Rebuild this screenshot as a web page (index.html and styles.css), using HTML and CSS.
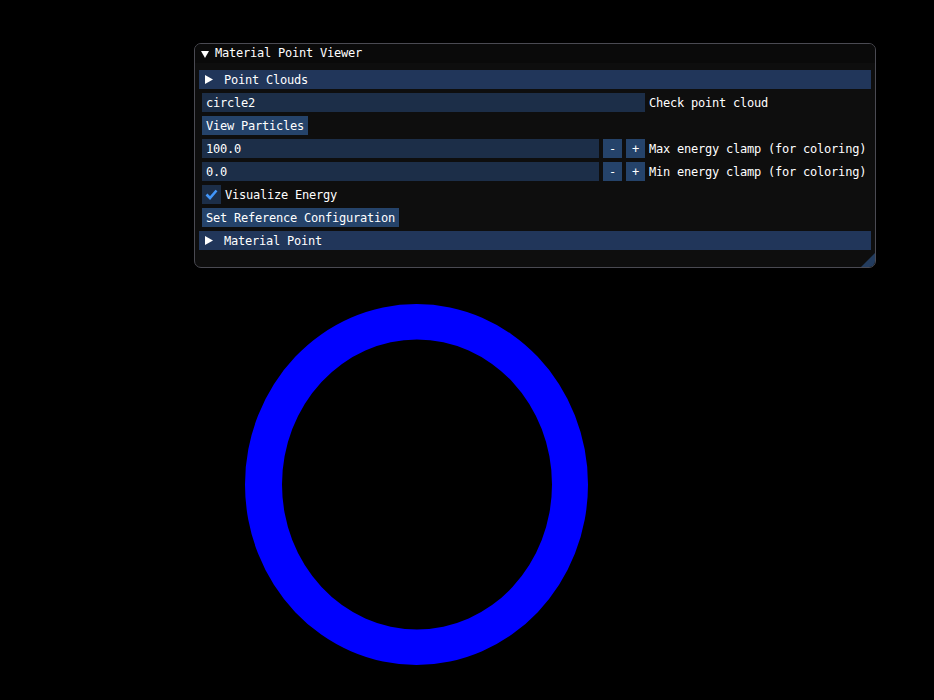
FILE: index.html
```html
<!DOCTYPE html>
<html>
<head>
<meta charset="utf-8">
<link rel="stylesheet" href="styles.css">
</head>
<body>
<div class="scene">
  <svg class="viewport" width="934" height="700" viewBox="0 0 934 700">
    <path fill="#0000ff" fill-rule="evenodd" d="M245 484.5 A171.5 180.5 0 1 0 588 484.5 A171.5 180.5 0 1 0 245 484.5 Z M282 484.5 A135 145 0 1 0 552 484.5 A135 145 0 1 0 282 484.5 Z"/>
  </svg>

  <div class="win">
    <div class="titlebar">
      <svg class="tri" width="8" height="8" viewBox="0 0 8 8"><polygon points="0,1 8,1 4,8" fill="#fff"/></svg>
      <span class="title">Material Point Viewer</span>
    </div>
    <div class="content">
      <div class="header">
        <svg class="tri" width="8" height="9" viewBox="0 0 8 9"><polygon points="0,0 8,4.5 0,9" fill="#fff"/></svg>
        <span class="txt">Point Clouds</span>
      </div>
      <div class="row">
        <div class="input wide">circle2</div>
        <span class="label">Check point cloud</span>
      </div>
      <div class="row">
        <div class="btn">View Particles</div>
      </div>
      <div class="row">
        <div class="input drag">100.0</div>
        <div class="btn sq">-</div>
        <div class="btn sq">+</div>
        <span class="label">Max energy clamp (for coloring)</span>
      </div>
      <div class="row">
        <div class="input drag">0.0</div>
        <div class="btn sq">-</div>
        <div class="btn sq">+</div>
        <span class="label">Min energy clamp (for coloring)</span>
      </div>
      <div class="row">
        <div class="check">
          <svg width="13" height="11" viewBox="0 0 13 11"><polyline points="1.5,5.5 5,9 11.5,1.5" fill="none" stroke="#4296fa" stroke-width="2.6"/></svg>
        </div>
        <span class="label">Visualize Energy</span>
      </div>
      <div class="row">
        <div class="btn">Set Reference Configuration</div>
      </div>
      <div class="header">
        <svg class="tri" width="8" height="9" viewBox="0 0 8 9"><polygon points="0,0 8,4.5 0,9" fill="#fff"/></svg>
        <span class="txt">Material Point</span>
      </div>
    </div>
    <div class="grip"></div>
  </div>
</div>
</body>
</html>
```

FILE: styles.css
```css
html, body {
  margin: 0;
  padding: 0;
  background: #000;
}

.scene {
  position: relative;
  width: 934px;
  height: 700px;
  overflow: hidden;
  background: #000;
  font-family: "DejaVu Sans Mono", "Liberation Mono", monospace;
  font-size: 12px;
  letter-spacing: -0.22px;
  color: #fff;
}

.viewport {
  position: absolute;
  left: 0;
  top: 0;
  display: block;
}

.win {
  position: absolute;
  left: 194px;
  top: 43px;
  width: 682px;
  height: 225px;
  box-sizing: border-box;
  border: 1px solid #4a4a52;
  border-radius: 7px;
  background: #0e0e0e;
  overflow: hidden;
}

.titlebar {
  height: 19px;
  display: flex;
  align-items: center;
  padding-left: 6px;
  background: #0a0a0a;
}

.titlebar .tri {
  margin-right: 6px;
}

.title {
  line-height: 19px;
}

.content {
  display: flex;
  flex-direction: column;
  gap: 4px;
  padding: 7px 7px 0 7px;
}

.header {
  height: 19px;
  margin: 0 -3px;
  display: flex;
  align-items: center;
  padding-left: 6px;
  background: #21365a;
}

.header .tri {
  margin-right: 11px;
}

.header .txt {
  height: 19px;
  box-sizing: border-box;
  padding-top: 2px;
  line-height: 17px;
}

.row {
  height: 19px;
  display: flex;
  align-items: center;
  gap: 4px;
}

.input,
.btn,
.label {
  height: 19px;
  box-sizing: border-box;
  padding-top: 2px;
  line-height: 17px;
}

.input {
  padding-left: 4px;
  background: #1c2e48;
}

.input.wide {
  width: 443px;
}

.input.drag {
  width: 397px;
}

.btn {
  padding-left: 4px;
  padding-right: 4px;
  background: #25436a;
}

.btn.sq {
  width: 19px;
  padding-left: 0;
  padding-right: 0;
  text-align: center;
}

.check {
  width: 19px;
  height: 19px;
  background: #1c2e48;
  display: flex;
  align-items: center;
  justify-content: center;
}

.grip {
  position: absolute;
  right: 0;
  bottom: 0;
  width: 0;
  height: 0;
  border-style: solid;
  border-width: 0 0 14px 14px;
  border-color: transparent transparent #233c5e transparent;
}
```
